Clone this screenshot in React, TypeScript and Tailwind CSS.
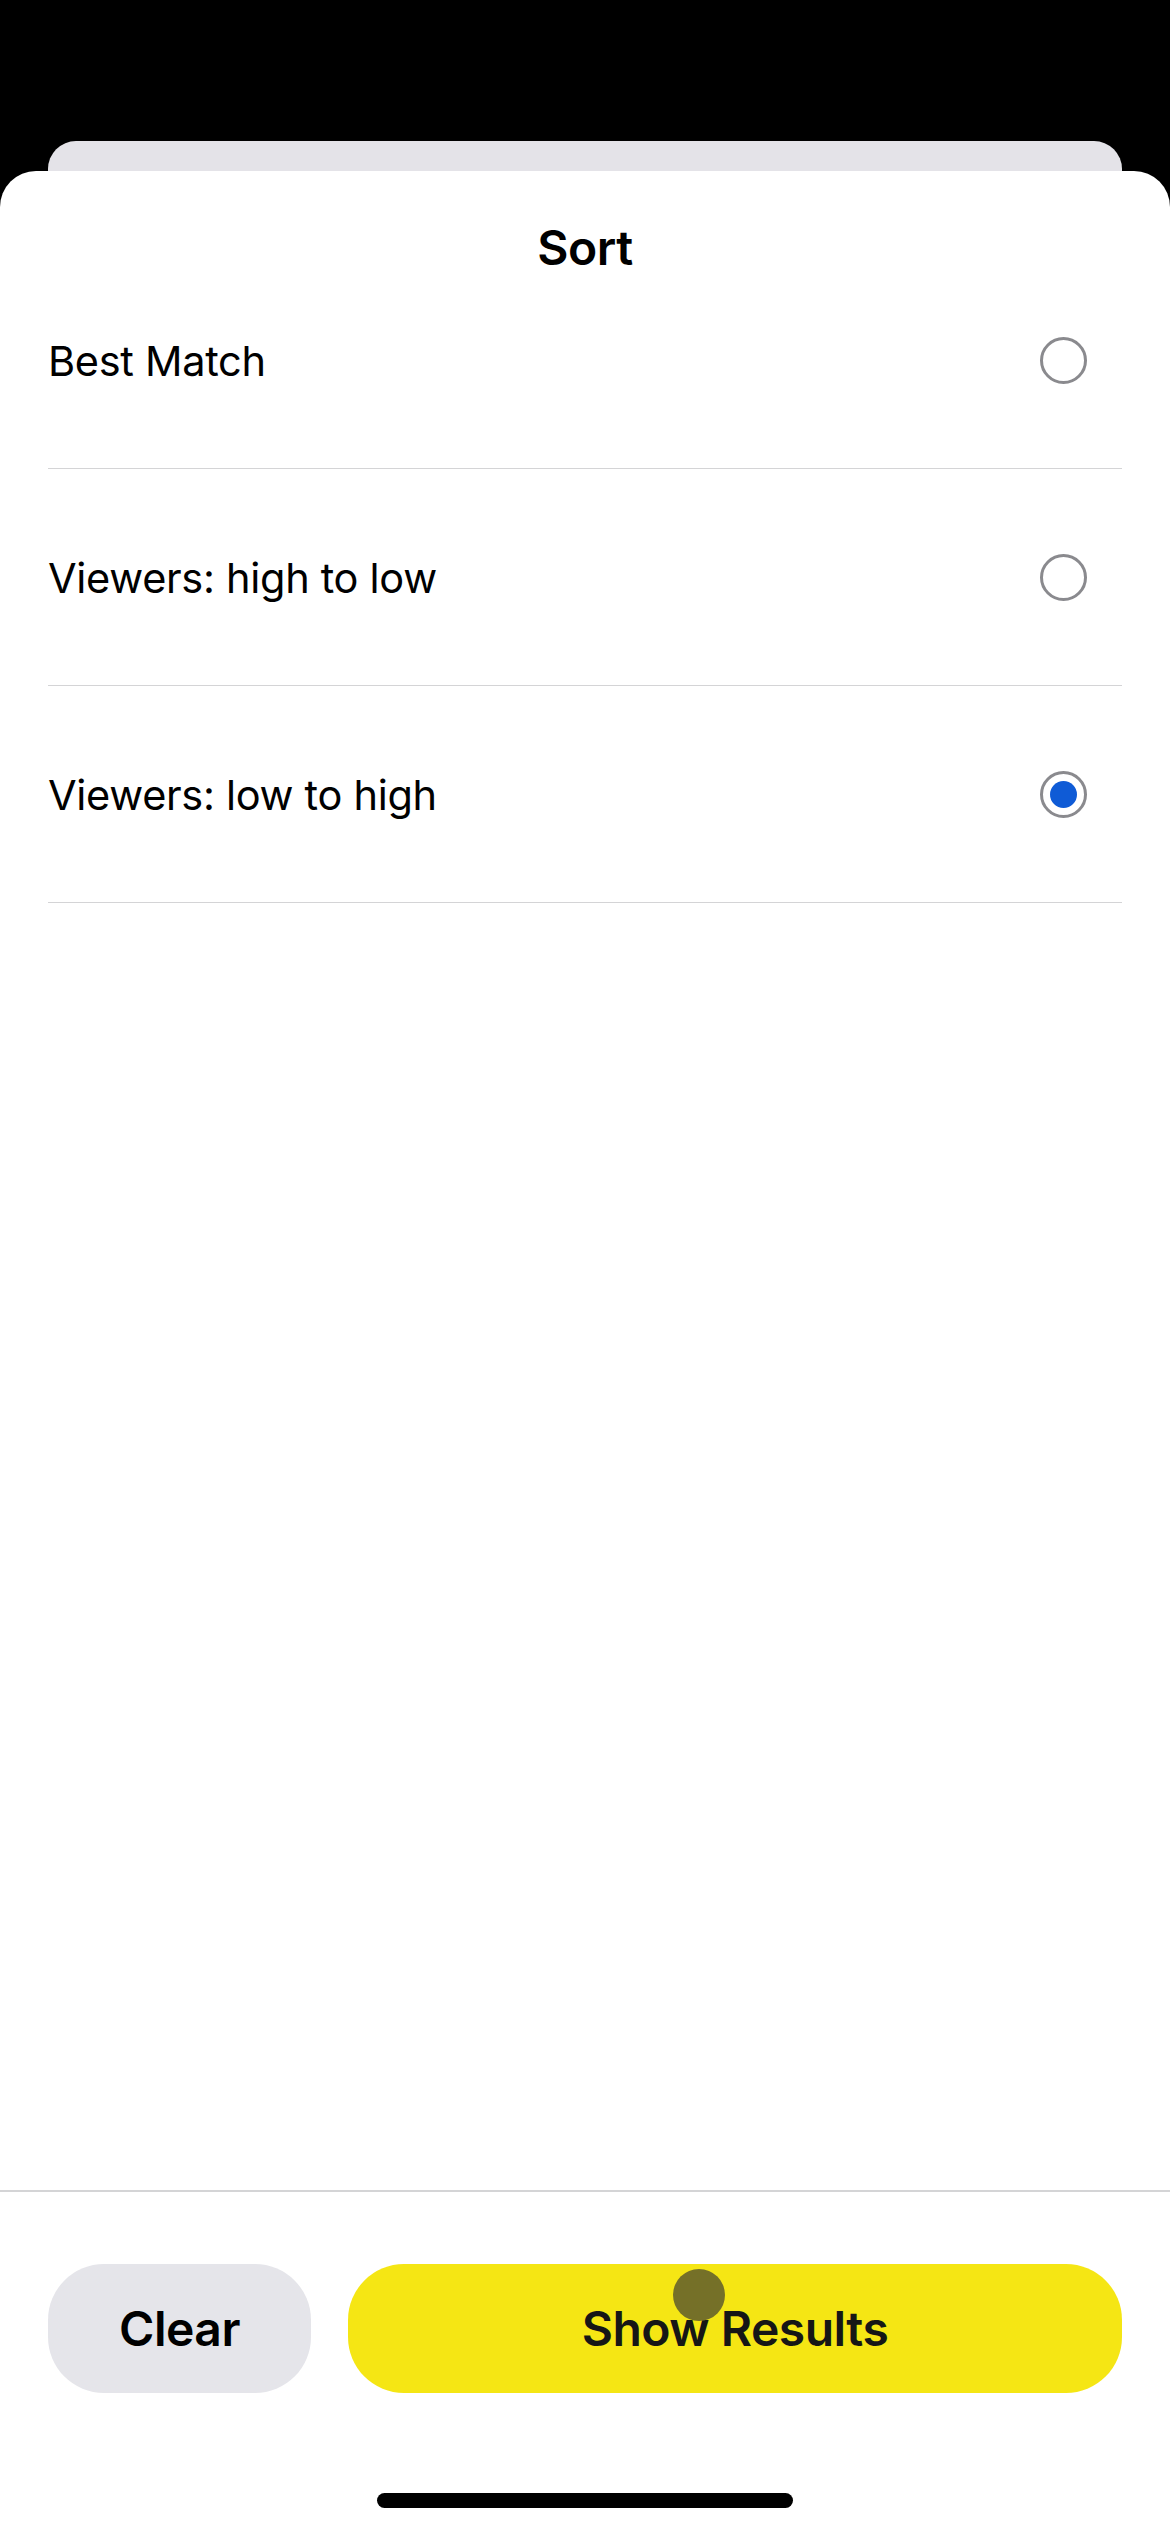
import React, { useState } from 'react'

const options = ['Best Match', 'Viewers: high to low', 'Viewers: low to high']

const Radio: React.FC<{ checked: boolean }> = ({ checked }) => (
  <div className="w-[47px] h-[47px] rounded-full border-[3px] border-[#8a8a8e] flex items-center justify-center">
    {checked && <div className="w-[27px] h-[27px] rounded-full bg-[#0f5bd6]" />}
  </div>
)

export default function App() {
  const [selected, setSelected] = useState(2)

  return (
    <div
      className="w-[1170px] h-[2532px] bg-black flex flex-col overflow-hidden"
      style={{ fontFamily: 'Inter, "Noto Sans", sans-serif' }}
    >
      {/* card peeking behind the sheet */}
      <div className="h-[171px] flex flex-col justify-end px-[48px] shrink-0">
        <div className="h-[30px] bg-[#e4e3e8] rounded-t-[28px]" />
      </div>

      {/* Sheet */}
      <div className="flex-1 bg-white rounded-t-[36px] flex flex-col">
        <div className="h-[81px] pt-[53px] text-center">
          <span className="text-[48px] leading-[48px] font-semibold text-black tracking-[-0.5px]">Sort</span>
        </div>

        <div className="px-[48px]">
          {options.map((label, i) => (
            <button
              key={label}
              onClick={() => setSelected(i)}
              className="w-full h-[217px] flex items-center justify-between border-b border-[#d4d4d6] pr-[35px] text-left"
            >
              <span className="text-[41.5px] leading-[50px] pt-[2px] text-black tracking-[-0.3px]">{label}</span>
              <Radio checked={selected === i} />
            </button>
          ))}
        </div>

        <div className="flex-1" />

        <div className="border-t-2 border-[#d4d4d6] bg-white pt-[72px] pb-[24px] flex flex-col items-center">
          <div className="w-full px-[48px] flex gap-[37px]">
            <button className="w-[263px] h-[129px] rounded-[56px] bg-[#e5e5ea] text-[48px] font-semibold text-black tracking-[-0.5px]">
              Clear
            </button>
            <button className="relative flex-1 h-[129px] rounded-[56px] bg-[#f5e614] text-[48px] font-semibold text-[#161616] tracking-[-0.5px]">
              Show Results
              <span className="absolute left-[325px] top-[5px] w-[52px] h-[52px] rounded-full bg-[#757028]" />
            </button>
          </div>
          <div className="mt-[100px] w-[416px] h-[15px] rounded-full bg-black" />
        </div>
      </div>
    </div>
  )
}
